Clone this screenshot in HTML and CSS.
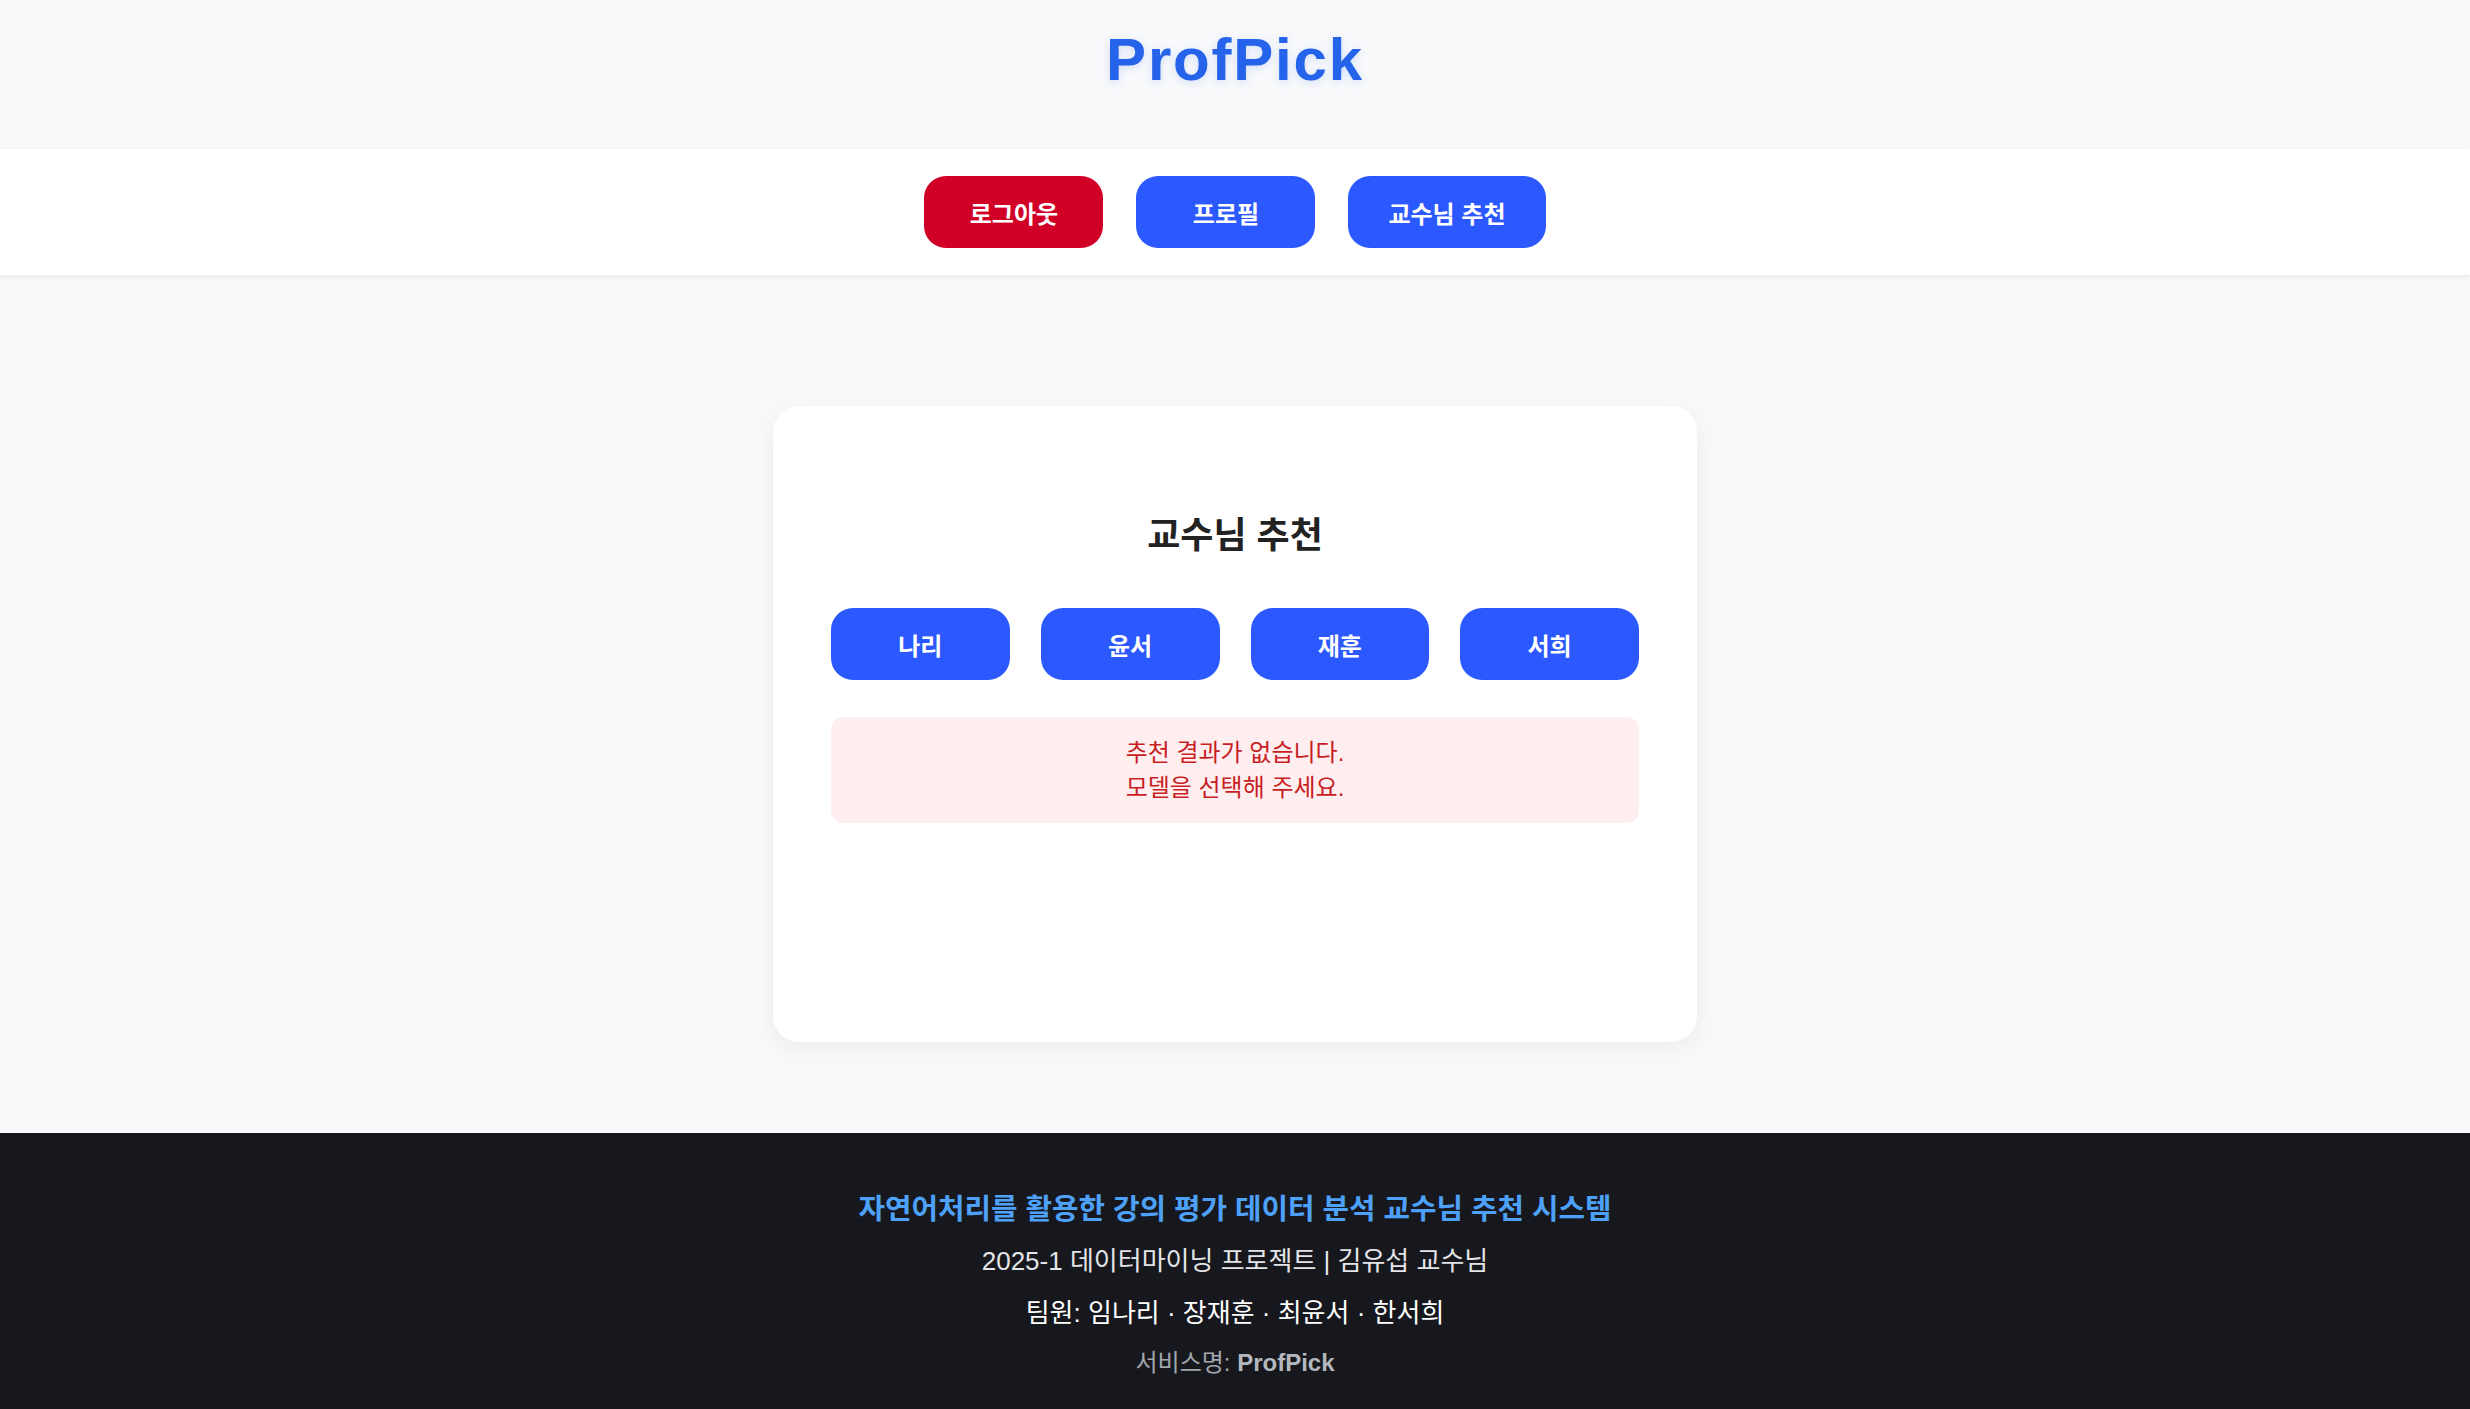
FILE: index.html
```html
<!DOCTYPE html>
<html lang="ko">
<head>
<meta charset="utf-8">
<title>ProfPick</title>
<link rel="stylesheet" href="styles.css">
</head>
<body>
<header class="site-header">
  <h1 class="logo">ProfPick</h1>
</header>
<nav class="nav">
  <button class="btn btn-red">로그아웃</button>
  <button class="btn btn-blue">프로필</button>
  <button class="btn btn-blue">교수님 추천</button>
</nav>
<main class="main">
  <section class="card">
    <h2 class="card-title">교수님 추천</h2>
    <div class="models">
      <button class="btn btn-blue">나리</button>
      <button class="btn btn-blue">윤서</button>
      <button class="btn btn-blue">재훈</button>
      <button class="btn btn-blue">서희</button>
    </div>
    <div class="error">추천 결과가 없습니다.<br>모델을 선택해 주세요.</div>
  </section>
</main>
<footer class="footer">
  <p class="f-title">자연어처리를 활용한 강의 평가 데이터 분석 교수님 추천 시스템</p>
  <p class="f-line">2025-1 데이터마이닝 프로젝트 | 김유섭 교수님</p>
  <p class="f-team">팀원: 임나리 · 장재훈 · 최윤서 · 한서희</p>
  <p class="f-service">서비스명: <strong>ProfPick</strong></p>
</footer>
</body>
</html>
```

FILE: styles.css
```css
* { box-sizing: border-box; }
html, body { margin: 0; padding: 0; }
body {
  font-family: "Liberation Sans", "Noto Sans CJK KR", sans-serif;
  background: #f8f9fb;
  color: #1f2328;
  min-height: 1409px;
  display: flex;
  flex-direction: column;
}
.site-header {
  height: 149px;
  display: flex;
  justify-content: center;
  padding-top: 22px;
}
.logo {
  margin: 0;
  font-size: 60px;
  line-height: 76px;
  font-weight: 700;
  letter-spacing: 1.8px;
  color: #2563eb;
  text-shadow: 0 2px 8px rgba(37, 99, 235, 0.18);
}
.nav {
  background: #fff;
  height: 126px;
  display: flex;
  justify-content: center;
  align-items: center;
  gap: 33px;
  box-shadow: 0 2px 6px rgba(0, 0, 0, 0.07);
  position: relative;
  z-index: 1;
}
.btn {
  font-family: "Liberation Sans", "Noto Sans CJK KR", sans-serif;
  font-size: 24px;
  font-weight: 700;
  color: #fff;
  border: none;
  height: 72px;
  min-width: 179px;
  padding: 0 40px;
  border-radius: 22px;
  cursor: pointer;
}
.btn-red { background: #d10027; }
.btn-blue { background: #2b58ff; }
.main {
  flex: 1;
  display: flex;
  justify-content: center;
  align-items: flex-start;
  padding-top: 131px;
}
.card {
  width: 924px;
  min-height: 636px;
  background: #fff;
  border-radius: 26px;
  padding: 58px;
  box-shadow: 0 6px 24px rgba(0, 0, 0, 0.06);
}
.card-title {
  margin: 52px 0 52px;
  text-align: center;
  font-size: 36px;
  line-height: 40px;
  font-weight: 700;
  color: #222;
}
.models {
  display: grid;
  grid-template-columns: repeat(4, 1fr);
  gap: 31px;
}
.models .btn { min-width: 0; padding: 0; }
.error {
  margin-top: 37px;
  background: #ffeef0;
  color: #c81e24;
  border-radius: 12px;
  padding: 18px;
  text-align: center;
  font-size: 24px;
  line-height: 35px;
}
.footer {
  background: #17181d;
  height: 276px;
  padding-top: 52px;
  text-align: center;
}
.footer p { margin: 0; }
.f-title {
  color: #4ea1f8;
  font-weight: 700;
  font-size: 28.8px;
  line-height: 48px;
}
.f-line {
  color: #e3e5e8;
  font-size: 26px;
  line-height: 40px;
  margin-top: 8px !important;
}
.f-team {
  color: #ffffff;
  font-size: 26px;
  line-height: 40px;
  margin-top: 12px !important;
}
.f-service {
  color: #a3a6ad;
  font-size: 24px;
  line-height: 36px;
  margin-top: 12px !important;
}
.f-service strong { color: #b5b8be; }
```
